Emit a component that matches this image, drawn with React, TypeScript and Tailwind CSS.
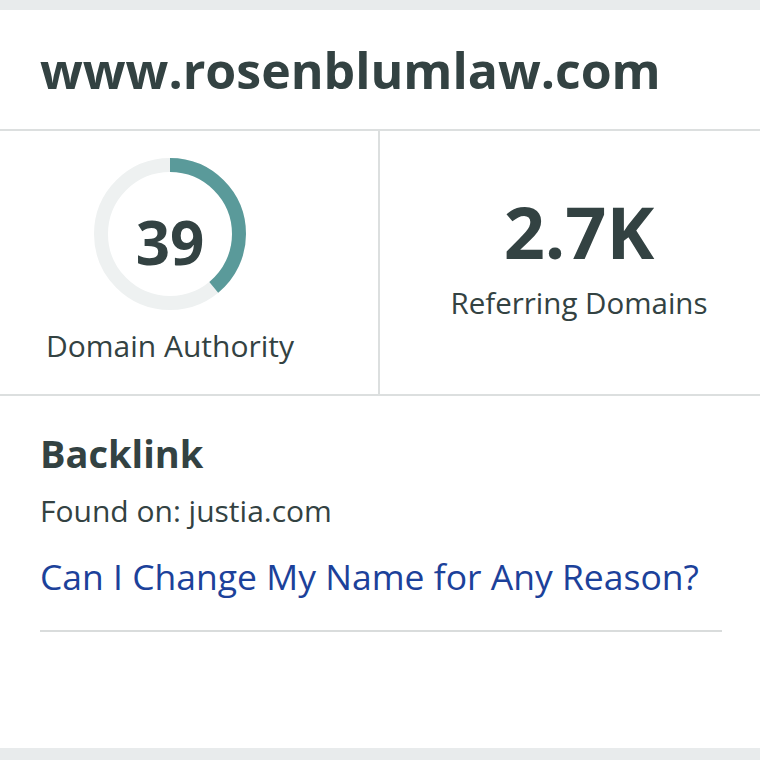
import React from "react";

function Donut() {
  const r = 69;
  const c = 2 * Math.PI * r;
  const pct = 0.39;
  return (
    <div className="relative w-[152px] h-[152px]">
      <svg width="152" height="152" viewBox="0 0 152 152">
        <circle cx="76" cy="76" r={r} fill="none" stroke="#eef1f1" strokeWidth="14" />
        <circle
          cx="76"
          cy="76"
          r={r}
          fill="none"
          stroke="#5a9a9a"
          strokeWidth="14"
          strokeDasharray={`${c * pct} ${c}`}
          transform="rotate(-90 76 76)"
        />
      </svg>
      <div className="absolute inset-0 flex items-center justify-center pt-[16px] text-[60px] font-bold text-[#334242] leading-none">
        39
      </div>
    </div>
  );
}

export default function App() {
  return (
    <div
      className="w-[760px] h-[760px] bg-[#e8ebec] pt-[10px] pb-[12px] flex flex-col"
      style={{ fontFamily: '"Open Sans", "Noto Sans", sans-serif' }}
    >
      <div className="bg-white flex-1 flex flex-col text-[#334242]">
        <div className="h-[121px] border-b-2 border-[#dcdfdf] px-[40px] flex items-center">
          <h1 className="text-[50px] font-bold leading-none">www.rosenblumlaw.com</h1>
        </div>
        <div className="grid grid-cols-2 h-[265px] border-b-2 border-[#dcdfdf]">
          <div className="border-r-2 border-[#dcdfdf] flex flex-col items-center pt-[27px] pr-[38px]">
            <Donut />
            <div className="mt-[21px] text-[30px] leading-none">Domain Authority</div>
          </div>
          <div className="flex flex-col items-center pt-[64px] pl-[18px]">
            <div className="text-[72px] font-bold leading-none">2.7K</div>
            <div className="mt-[21px] text-[29.5px] leading-none">Referring Domains</div>
          </div>
        </div>
        <div className="px-[40px] pt-[38px]">
          <div className="text-[38px] font-bold leading-none">Backlink</div>
          <div className="mt-[24px] text-[30px] leading-none">Found on: justia.com</div>
          <div className="mt-[33px] text-[35.5px] leading-none text-[#1c419a]">Can I Change My Name for Any Reason?</div>
          <div className="mt-[35px] w-[682px] h-[2px] bg-[#d9dcdc]" />
        </div>
      </div>
    </div>
  );
}
